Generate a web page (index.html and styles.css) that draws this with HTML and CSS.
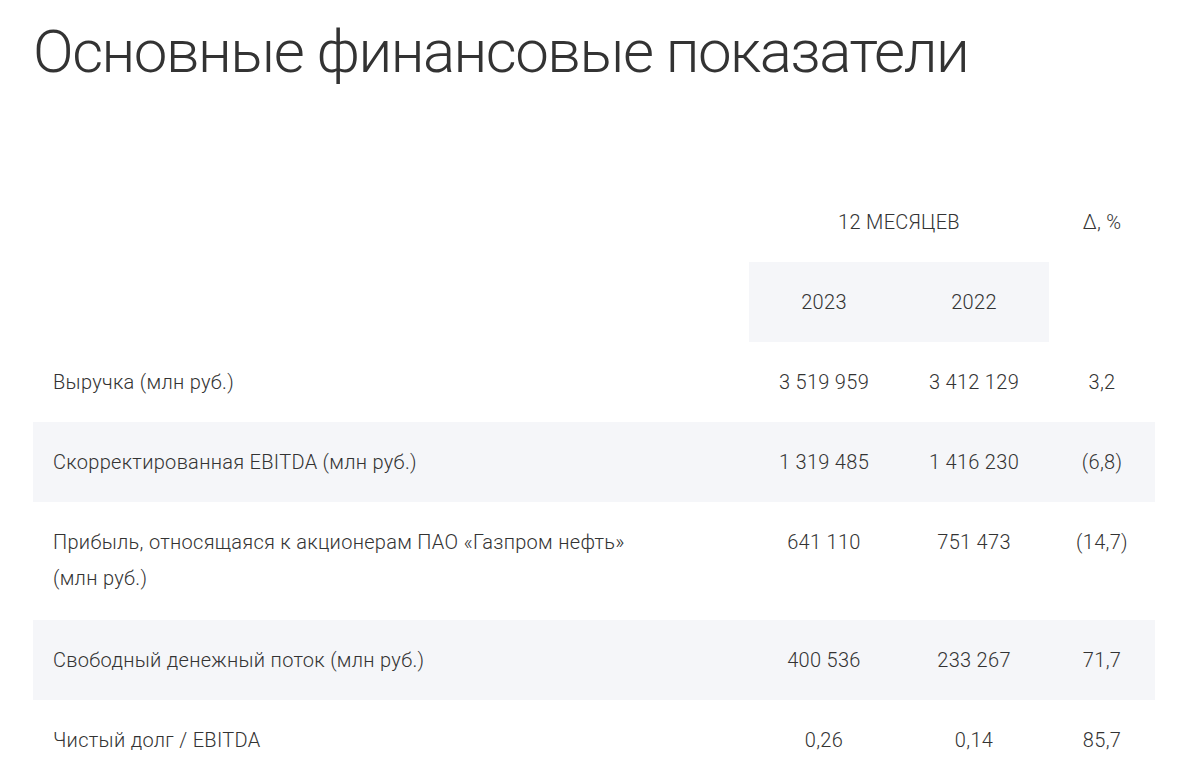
FILE: index.html
```html
<!DOCTYPE html>
<html lang="ru">
<head>
    <meta charset="UTF-8">
    <meta name="viewport" content="width=device-width, initial-scale=1.0">
    <title>Основные финансовые показатели</title>
    <link rel="stylesheet" href="styles.css">
</head>
<body>
    <div class="page">
        <h1>Основные финансовые показатели</h1>

        <table class="fin-table">
            <colgroup>
                <col class="col-label">
                <col class="col-num">
                <col class="col-num">
                <col class="col-delta">
            </colgroup>
            <thead>
                <tr>
                    <th></th>
                    <th colspan="2" class="period">12 МЕСЯЦЕВ</th>
                    <th rowspan="2" class="delta">Δ, %</th>
                </tr>
                <tr>
                    <th></th>
                    <th class="year">2023</th>
                    <th class="year">2022</th>
                </tr>
            </thead>
            <tbody>
                <tr>
                    <td>Выручка (млн руб.)</td>
                    <td>3 519 959</td>
                    <td>3 412 129</td>
                    <td>3,2</td>
                </tr>
                <tr class="shaded">
                    <td>Скорректированная EBITDA (млн руб.)</td>
                    <td>1 319 485</td>
                    <td>1 416 230</td>
                    <td>(6,8)</td>
                </tr>
                <tr class="tall">
                    <td>Прибыль, относящаяся к акционерам ПАО «Газпром нефть»<br>(млн руб.)</td>
                    <td>641 110</td>
                    <td>751 473</td>
                    <td>(14,7)</td>
                </tr>
                <tr class="shaded">
                    <td>Свободный денежный поток (млн руб.)</td>
                    <td>400 536</td>
                    <td>233 267</td>
                    <td>71,7</td>
                </tr>
                <tr>
                    <td>Чистый долг / EBITDA</td>
                    <td>0,26</td>
                    <td>0,14</td>
                    <td>85,7</td>
                </tr>
            </tbody>
        </table>
    </div>
</body>
</html>
```

FILE: styles.css
```css
body { margin: 0; font-family: Roboto, "Liberation Sans", sans-serif; font-weight: 300; color: #333; background: #fff; }
.page { padding: 16px 45px 0 33px; }
h1 { margin: 0 0 94px; font-size: 60px; line-height: 72px; font-weight: 300; letter-spacing: -1.5px; color: #333; }
.fin-table { width: 1122px; border-collapse: collapse; table-layout: fixed; font-size: 20px; line-height: 36px; letter-spacing: 0.3px; }
.col-label { width: 716px; }
.col-num { width: 150px; }
.col-delta { width: 106px; }
.fin-table th { font-weight: 300; text-align: center; padding: 22px 0; vertical-align: top; }
.fin-table th.year { background-color: #f5f6f9; }
.fin-table td { padding: 22px 0; text-align: center; vertical-align: top; }
.fin-table td:first-child { text-align: left; padding-left: 20px; }
.fin-table tr.shaded td { background-color: #f5f6f9; }
.fin-table tr.tall td { padding-bottom: 24px; }
```
